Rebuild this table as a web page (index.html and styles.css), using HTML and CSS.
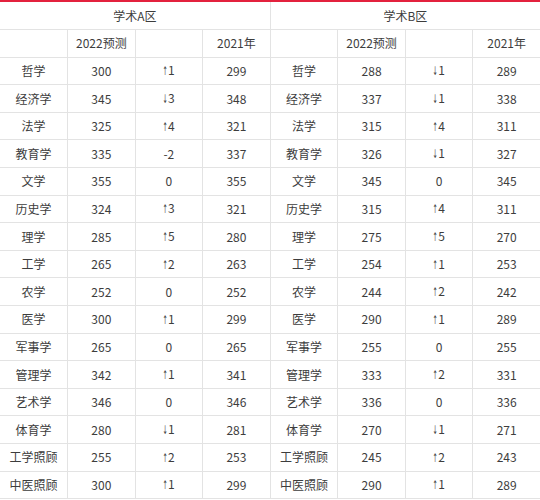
FILE: index.html
```html
<!DOCTYPE html>
<html lang="zh">
<head>
<meta charset="utf-8">
<link rel="stylesheet" href="styles.css">
</head>
<body>
<div class="topbar"></div>
<table class="score">
<colgroup><col><col><col><col><col><col><col><col></colgroup>
<tr><td colspan="4">学术A区</td><td colspan="4">学术B区</td></tr>
<tr><td></td><td>2022预测</td><td></td><td>2021年</td><td></td><td>2022预测</td><td></td><td>2021年</td></tr>
<tr><td>哲学</td><td>300</td><td><span class="arr">↑</span>1</td><td>299</td><td>哲学</td><td>288</td><td><span class="arr">↓</span>1</td><td>289</td></tr>
<tr><td>经济学</td><td>345</td><td><span class="arr">↓</span>3</td><td>348</td><td>经济学</td><td>337</td><td><span class="arr">↓</span>1</td><td>338</td></tr>
<tr><td>法学</td><td>325</td><td><span class="arr">↑</span>4</td><td>321</td><td>法学</td><td>315</td><td><span class="arr">↑</span>4</td><td>311</td></tr>
<tr><td>教育学</td><td>335</td><td>-2</td><td>337</td><td>教育学</td><td>326</td><td><span class="arr">↓</span>1</td><td>327</td></tr>
<tr><td>文学</td><td>355</td><td>0</td><td>355</td><td>文学</td><td>345</td><td>0</td><td>345</td></tr>
<tr><td>历史学</td><td>324</td><td><span class="arr">↑</span>3</td><td>321</td><td>历史学</td><td>315</td><td><span class="arr">↑</span>4</td><td>311</td></tr>
<tr><td>理学</td><td>285</td><td><span class="arr">↑</span>5</td><td>280</td><td>理学</td><td>275</td><td><span class="arr">↑</span>5</td><td>270</td></tr>
<tr><td>工学</td><td>265</td><td><span class="arr">↑</span>2</td><td>263</td><td>工学</td><td>254</td><td><span class="arr">↑</span>1</td><td>253</td></tr>
<tr><td>农学</td><td>252</td><td>0</td><td>252</td><td>农学</td><td>244</td><td><span class="arr">↑</span>2</td><td>242</td></tr>
<tr><td>医学</td><td>300</td><td><span class="arr">↑</span>1</td><td>299</td><td>医学</td><td>290</td><td><span class="arr">↑</span>1</td><td>289</td></tr>
<tr><td>军事学</td><td>265</td><td>0</td><td>265</td><td>军事学</td><td>255</td><td>0</td><td>255</td></tr>
<tr><td>管理学</td><td>342</td><td><span class="arr">↑</span>1</td><td>341</td><td>管理学</td><td>333</td><td><span class="arr">↑</span>2</td><td>331</td></tr>
<tr><td>艺术学</td><td>346</td><td>0</td><td>346</td><td>艺术学</td><td>336</td><td>0</td><td>336</td></tr>
<tr><td>体育学</td><td>280</td><td><span class="arr">↓</span>1</td><td>281</td><td>体育学</td><td>270</td><td><span class="arr">↓</span>1</td><td>271</td></tr>
<tr><td>工学照顾</td><td>255</td><td><span class="arr">↑</span>2</td><td>253</td><td>工学照顾</td><td>245</td><td><span class="arr">↑</span>2</td><td>243</td></tr>
<tr><td>中医照顾</td><td>300</td><td><span class="arr">↑</span>1</td><td>299</td><td>中医照顾</td><td>290</td><td><span class="arr">↑</span>1</td><td>289</td></tr>
</table>
</body>
</html>
```
FILE: styles.css
```css
html, body {
  margin: 0;
  padding: 0;
  background: #ffffff;
}
body {
  width: 540px;
  overflow: hidden;
  font-family: "Noto Sans CJK SC", "Noto Sans", sans-serif;
  font-size: 12px;
  color: #3d3d3d;
}
.topbar {
  height: 2px;
  background: #e3213d;
}
.score {
  width: 541px;
  border-collapse: collapse;
  table-layout: fixed;
}
.score col {
  width: 67.5px;
}
.score tr {
  height: 27.6px;
}
.score td {
  border: 1px solid #e3e3e3;
  text-align: center;
  vertical-align: middle;
  padding: 0;
  line-height: 16px;
  white-space: nowrap;
}
.score tr:first-child td {
  border-top: none;
}
.score td:first-child {
  border-left: none;
}
.arr {
  font-family: "DejaVu Sans", sans-serif;
  font-size: 12px;
  display: inline-block;
  transform: scaleX(0.5);
  margin: 0 -2px 0 -3px;
}
```
